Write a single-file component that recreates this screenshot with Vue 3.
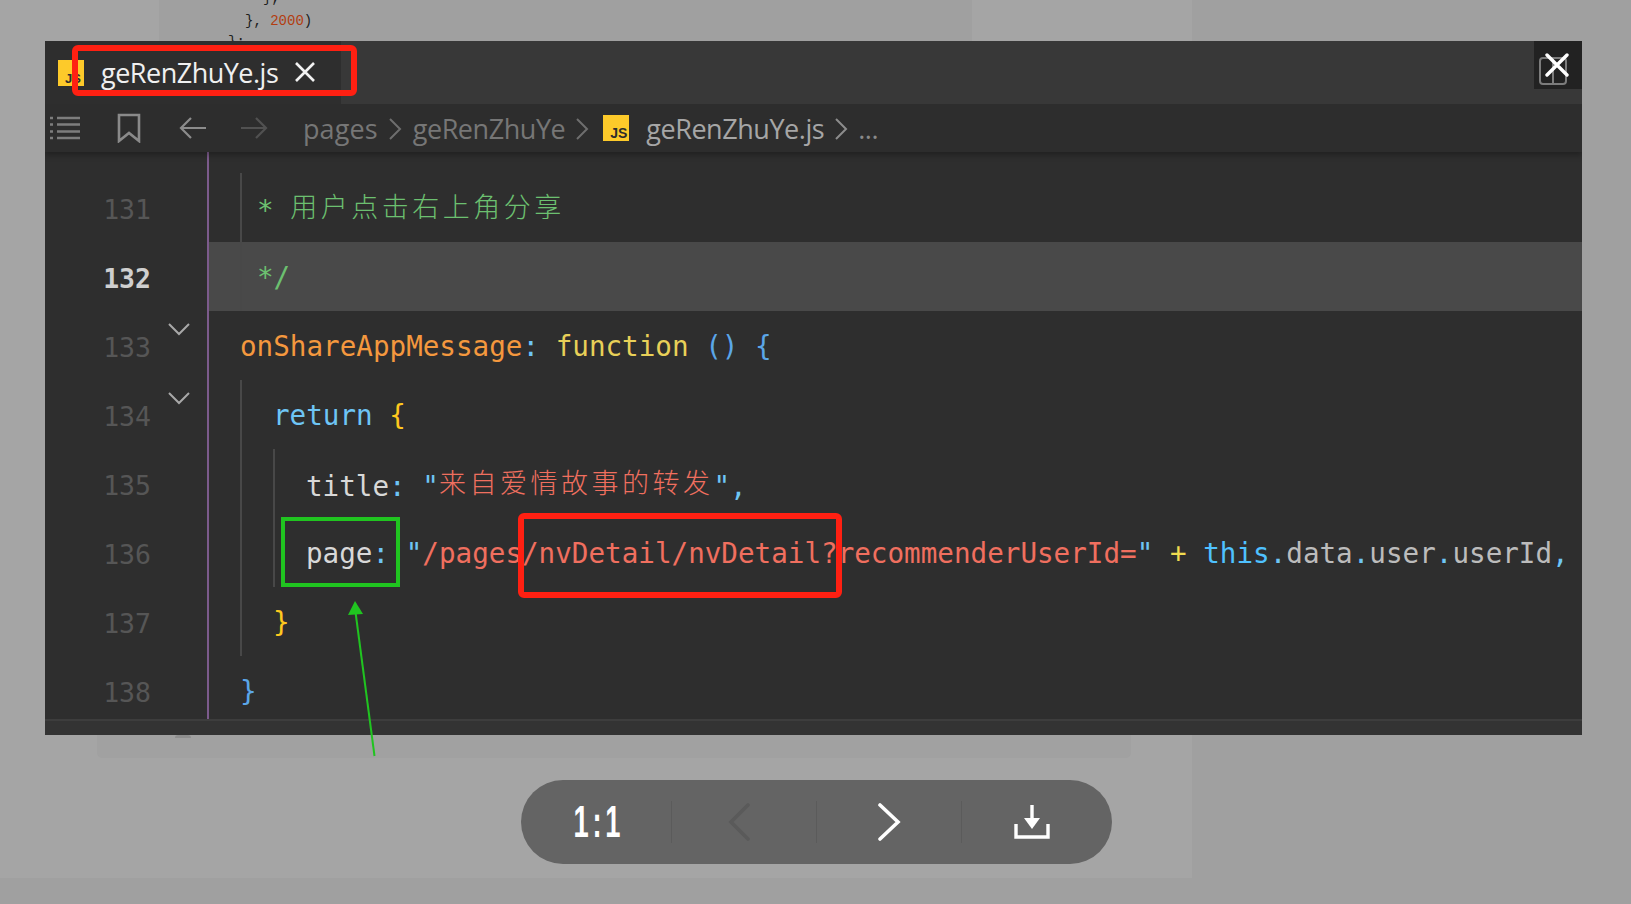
<script setup>
const rows = [
  { no: 131, indent: ['half'] },
  { no: 132, indent: ['half'], active: true },
  { no: 133, fold: true },
  { no: 134, fold: true, indent: ['full'] },
  { no: 135, indent: ['full', 'full'] },
  { no: 136, indent: ['full', 'full'] },
  { no: 137, indent: ['full'] },
  { no: 138 }
]
</script>

<template>
  <div class="page">
    <div class="backdrop">
      <div class="panel">
        <div class="card-top">
          <div class="bg-code first">},</div>
          <div class="bg-code second">}, <span class="bg-num">2000</span>)</div>
          <div class="bg-code third">};</div>
        </div>
        <div class="card-bottom"><i class="bump"></i></div>
      </div>
    </div>

    <div class="window">
      <div class="tabs">
        <div class="tab">
          <div class="js js-tab">JS</div>
          <span class="tab-name">geRenZhuYe.js</span>
          <svg class="tab-x" width="22" height="22" viewBox="0 0 22 22"><path d="M2 2l18 18M20 2L2 20" stroke="#f2f2f2" stroke-width="2.6" fill="none"/></svg>
        </div>
        <div class="corner">
          <svg class="split" width="30" height="30" viewBox="0 0 30 30"><rect x="2" y="2" width="26" height="26" rx="3" fill="none" stroke="#7c7c7c" stroke-width="2"/><path d="M15 2v26" stroke="#7c7c7c" stroke-width="2"/></svg>
          <svg class="close" width="24" height="24" viewBox="0 0 24 24"><path d="M2 2l20 20M22 2L2 22" stroke="#fff" stroke-width="3.4" stroke-linecap="round" fill="none"/></svg>
        </div>
      </div>

      <div class="crumbs">
        <svg class="i-list" width="32" height="24" viewBox="0 0 32 24"><path d="M1 2h3M8 2h23M1 8.500h3M8 8.500h23M1 15.500h3M8 15.500h23M1 22h3M8 22h23" stroke="#7d7d7d" stroke-width="2.400"/></svg>
        <svg class="i-mark" width="24" height="30" viewBox="0 0 24 30"><path d="M2 2h20v26l-10-8-10 8z" fill="none" stroke="#8a8a8a" stroke-width="2.600"/></svg>
        <svg class="i-back" width="28" height="24" viewBox="0 0 28 24"><path d="M27 12H2M12 2L2 12l10 10" fill="none" stroke="#8c8c8c" stroke-width="2.200"/></svg>
        <svg class="i-next" width="28" height="24" viewBox="0 0 28 24"><path d="M1 12h25M16 2l10 10-10 10" fill="none" stroke="#515151" stroke-width="2.200"/></svg>
        <span class="c-dim c-pages">pages</span>
        <svg class="c-sep c-sep-first" width="14" height="24" viewBox="0 0 14 24"><path d="M2 2l10 10L2 22" fill="none" stroke="#6e6e6e" stroke-width="2"/></svg>
        <span class="c-dim">geRenZhuYe</span>
        <svg class="c-sep" width="14" height="24" viewBox="0 0 14 24"><path d="M2 2l10 10L2 22" fill="none" stroke="#6e6e6e" stroke-width="2"/></svg>
        <div class="js js-crumb">JS</div>
        <span class="c-file">geRenZhuYe.js</span>
        <svg class="c-sep" width="14" height="24" viewBox="0 0 14 24"><path d="M2 2l10 10L2 22" fill="none" stroke="#8c8c8c" stroke-width="2"/></svg>
        <span class="c-dots">...</span>
      </div>

      <div class="editor">
        <div class="spacer"></div>
        <div v-for="r in rows" :key="r.no" class="row" :class="{ active: r.active }">
          <div class="gutter">
            <span class="num">{{ r.no }}</span>
            <svg class="fold" :class="{ hidden: !r.fold }" width="24" height="14" viewBox="0 0 24 14"><path d="M2 2l10 10L22 2" fill="none" stroke="#a8a8a8" stroke-width="2"/></svg>
          </div>
          <div class="code">
            <i v-for="(g, idx) in r.indent || []" :key="idx" class="guide" :class="g"></i>
            <span v-if="r.no === 131" class="cm">* <span class="cjk">用户点击右上角分享</span></span>
            <span v-else-if="r.no === 132" class="cm">*/</span>
            <span v-else-if="r.no === 133"><span class="fn">onShareAppMessage</span><span class="blue">:</span> <span class="kw">function</span> <span class="paren">()</span> <span class="paren">{</span></span>
            <span v-else-if="r.no === 134"><span class="blue">return</span> <span class="gold">{</span></span>
            <span v-else-if="r.no === 135"><span class="prop">title</span><span class="blue">:</span> <span class="blue">"</span><span class="str cjk">来自爱情故事的转发</span><span class="blue">"</span><span class="blue">,</span></span>
            <span v-else-if="r.no === 136"><span class="prop">page</span><span class="blue">:</span> <span class="blue">"</span><span class="str">/pages/nvDetail/nvDetail?recommenderUserId=</span><span class="blue">"</span> <span class="gold2">+</span> <span class="blue2">this</span><span class="blue">.</span><span class="prop2">data</span><span class="blue">.</span><span class="prop2">user</span><span class="blue">.</span><span class="prop2">userId</span><span class="blue">,</span></span>
            <span v-else-if="r.no === 137" class="gold">}</span>
            <span v-else class="paren">}</span>
          </div>
        </div>
      </div>
      <div class="status"></div>

      <!-- annotations drawn on top of the screenshot -->
      <div class="mark red-tab"></div>
      <div class="mark red-path"></div>
      <div class="mark green-page"></div>
      <svg class="arrow" width="40" height="170" viewBox="0 0 40 170"><path d="M11.500 16L30.500 160" stroke="#20c420" stroke-width="2" fill="none"/><path d="M11 5l8 13-15 1z" fill="#20c420"/></svg>
    </div>

    <div class="toolbar">
      <div class="cell"><span class="ratio">1:1</span></div>
      <div class="cell">
        <svg class="nudge" width="24" height="38" viewBox="0 0 24 38"><path d="M21 2L4 19l17 17" fill="none" stroke="#5a5a5a" stroke-width="3.600" stroke-linecap="round"/></svg>
      </div>
      <div class="cell">
        <svg width="24" height="38" viewBox="0 0 24 38"><path d="M3 2l18 17L3 36" fill="none" stroke="#fff" stroke-width="3.600" stroke-linecap="round"/></svg>
      </div>
      <div class="cell">
        <svg class="nudge" width="36" height="34" viewBox="0 0 36 34"><path d="M18 0v14" stroke="#fff" stroke-width="3.400" fill="none"/><path d="M10 13h16l-8 11z" fill="#fff"/><path d="M2 19v13h32V19" fill="none" stroke="#fff" stroke-width="3.400"/></svg>
      </div>
    </div>
  </div>
</template>

<style>
html, body { margin: 0; padding: 0; }
</style>

<style scoped>
.page {
  position: relative;
  width: 1631px;
  height: 904px;
  overflow: hidden;
  background: #a0a0a0;
  font-family: "Open Sans", "Noto Sans", sans-serif;
}
.backdrop { position: absolute; inset: 0; }
.panel { position: relative; width: 1192px; height: 878px; background: #a5a5a5; }
.card-top { position: absolute; left: 159px; top: 0; width: 813px; height: 300px; background: #a0a0a0; }
.card-bottom { position: absolute; left: 97px; top: 400px; width: 1034px; height: 358px; background: #a1a1a1; border-radius: 0 0 5px 5px; }
.bump { position: absolute; left: 78px; top: 335px; width: 16px; height: 3px; border-radius: 8px 8px 0 0; background: #8e8e8e; }
.bg-code { position: absolute; font: 14px/18px "Liberation Mono", monospace; color: #1d1d1d; white-space: pre; }
.first { left: 104px; top: -11px; }
.second { left: 86px; top: 12px; }
.third { left: 69px; top: 33px; }
.bg-num { color: #b33d10; }

.window {
  position: relative;
  margin: 41px 0 0 45px;
  width: 1537px;
  height: 694px;
  background: #2e2e2e;
  display: inline-flex;
  flex-direction: column;
  vertical-align: top;
}
.tabs { height: 63px; background: #383838; display: flex; justify-content: space-between; flex: none; }
.tab { width: 296px; background: #2e2e2e; display: flex; align-items: flex-start; color: #f0f0f0; }
.js {
  flex: none;
  background: #fdca2a;
  color: #2c2c2c;
  font-family: "Liberation Sans", sans-serif;
  font-weight: 700;
  display: flex;
  align-items: flex-end;
  justify-content: flex-end;
  box-sizing: border-box;
}
.js-tab { width: 26px; height: 26px; margin: 19px 0 0 13px; font-size: 13px; line-height: 14px; padding: 0 3px 0 0; }
.js-crumb { width: 26px; height: 26px; margin: 0 0 0 14px; font-size: 14px; line-height: 15px; padding: 0 2px 0 0; letter-spacing: 0; }
.tab-name { margin: 11px 0 0 17px; font-size: 27px; line-height: 41px; letter-spacing: -0.5px; }
.tab-x { margin: 20px 0 0 16px; }
.corner { position: relative; width: 48px; height: 48px; background: #222; }
.split { position: absolute; left: 4px; top: 15px; }
.close { position: absolute; left: 11px; top: 12px; }

.crumbs {
  height: 48px;
  flex: none;
  background: #2d2d2d;
  box-shadow: 0 3px 6px rgba(0, 0, 0, 0.3);
  clip-path: inset(0 0 -12px 0);
  display: flex;
  align-items: center;
  position: relative;
  z-index: 1;
  font-size: 27px;
  letter-spacing: -0.45px;
}
.i-list { margin-left: 4px; }
.i-mark { margin-left: 36px; }
.i-back { margin-left: 38px; }
.i-next { margin-left: 33px; }
.c-pages { margin-left: 35px; letter-spacing: 0.1px; }
.c-dim { color: #767676; }
.c-sep { margin: 2px 0 0 10px; }
.c-sep-first { margin-left: 10px; }
.c-sep + .c-dim { margin-left: 11px; }
.c-file { color: #a6a6a6; margin-left: 17px; }
.c-dots { color: #8a8a8a; margin-left: 10px; }

.editor { height: 567px; flex: none; box-sizing: border-box; overflow: hidden; }
.spacer { width: 164px; height: 21px; box-sizing: border-box; border-right: 2px solid #7c5b8c; }
.row { height: 69px; display: flex; font: 27.6px/71px "DejaVu Sans Mono", "Noto Sans CJK SC", monospace; white-space: pre; }
.row.active { background: #494949; }
.gutter {
  width: 164px;
  flex: none;
  box-sizing: border-box;
  background: #2e2e2e;
  border-right: 2px solid #7c5b8c;
  display: flex;
  align-items: flex-start;
}
.num { width: 106px; text-align: right; color: #565656; font: 26.500px/73px "DejaVu Sans Mono", monospace; }
.active .num { color: #cfcfcf; font-weight: 700; }
.fold { margin: 11px 0 0 16px; }
.fold.hidden { visibility: hidden; }
.code { flex: 1; display: flex; padding-left: 31px; color: #d0d0d0; min-width: 0; height: 69px; }
.guide { flex: none; height: 69px; box-sizing: border-box; border-left: 2px solid #484848; }
.guide.half { width: 17px; }
.guide.full { width: 33px; }
.cm { color: #6cc070; }
.cjk { display: inline-block; transform: translateY(-3px); font-family: "Noto Sans CJK SC", sans-serif; font-size: 27px; letter-spacing: 3.500px; font-weight: 300; }
.fn { color: #f4983e; }
.kw { color: #e8d058; }
.paren { color: #5ba6e8; }
.blue { color: #6ec5f5; }
.blue2 { color: #4fc1ff; }
.gold { color: #ffc81e; }
.gold2 { color: #f0dc50; }
.prop { color: #d8d8d8; }
.prop2 { color: #bcbcbc; }
.str { color: #f06f5f; }

.status { height: 16px; flex: none; background: #333; border-top: 2px solid #3d3d3d; box-sizing: border-box; position: relative; z-index: 1; }

.mark { position: absolute; box-sizing: border-box; z-index: 2; }
.red-tab { left: 27px; top: 4px; width: 285px; height: 51px; border: 6px solid #ff2012; border-radius: 6px; }
.red-path { left: 473px; top: 472px; width: 324px; height: 85px; border: 6px solid #ff2012; border-radius: 6px; }
.green-page { left: 236px; top: 476px; width: 119px; height: 70px; border: 4px solid #20c420; }
.arrow { position: absolute; left: 299px; top: 555px; z-index: 2; }

.toolbar {
  position: relative;
  margin: 45px 0 0 521px;
  width: 591px;
  height: 84px;
  border-radius: 42px;
  background: #646464;
  display: grid;
  grid-template-columns: 150px 145px 145px 151px;
  align-items: center;
}
.cell { height: 42px; display: flex; align-items: center; justify-content: center; border-left: 1px solid #5b5b5b; }
.cell:first-child { border-left: 0; }
.nudge { margin-right: 10px; }
.ratio { color: #fff; font: 700 44px/42px "Liberation Sans", sans-serif; letter-spacing: 6px; transform: scaleX(0.62); margin-left: 6px; }
</style>
